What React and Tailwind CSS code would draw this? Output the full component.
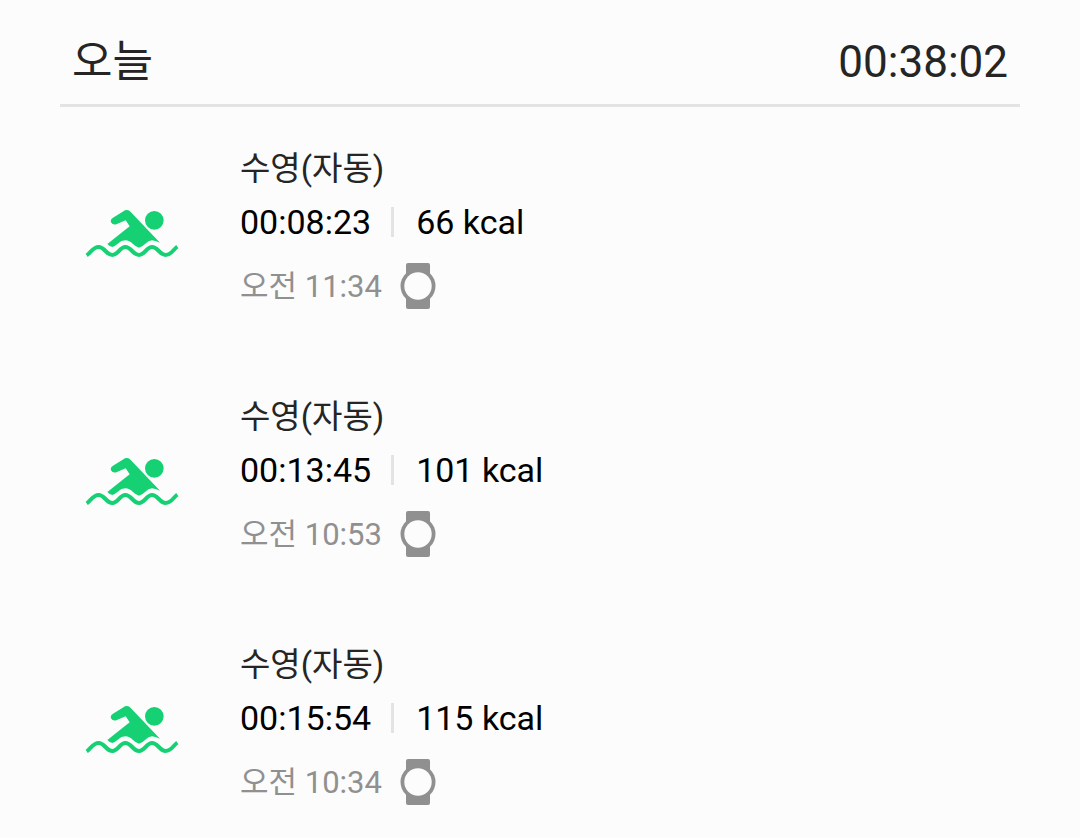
const workouts = [
  { id: 1, name: "수영(자동)", duration: "00:08:23", kcal: 66, time: "오전 11:34" },
  { id: 2, name: "수영(자동)", duration: "00:13:45", kcal: 101, time: "오전 10:53" },
  { id: 3, name: "수영(자동)", duration: "00:15:54", kcal: 115, time: "오전 10:34" },
];

function SwimIcon() {
  return (
    <svg className="w-24 h-14 shrink-0" viewBox="27 30 288 168" fill="#16d174" aria-hidden="true">
      <circle cx="238" cy="76" r="28" />
      <path d="M114 68L150 46Q158 43 165 49L255 143Q244 138 231 136Q220 137 211 146Q201 156 192 158Q183 156 174 147Q163 136 151 136Q139 136 128 146Q119 154 112 156Q104 154 97 147L164 94L152 76L124 88Q113 91 108 82Q105 73 114 68Z" />
      <path
        d="M35 181C46 174 54 156 71 156C89 156 94 180 112 180C130 180 134 156 151 156C169 156 174 180 192 180C210 180 214 156 231 156C249 156 254 180 272 180C289 180 296 162 307 155"
        fill="none"
        stroke="#16d174"
        strokeWidth="12"
      />
    </svg>
  );
}

function WatchIcon() {
  return (
    <svg className="w-9 h-12 shrink-0" viewBox="0 0 36 48" aria-hidden="true">
      <path d="M8 1H28Q30 1 30 3V45Q30 47 28 47H8Q6 47 6 45V3Q6 1 8 1Z" fill="#909090" />
      <circle cx="18" cy="24" r="17.5" fill="#909090" />
      <circle cx="18" cy="24" r="13.7" fill="#fcfcfc" />
    </svg>
  );
}

export default function App() {
  return (
    <main className="min-h-screen bg-[#fcfcfc] px-[60px] font-[Roboto,'Noto_Sans_CJK_KR',sans-serif] text-[#252525]">
      {/* Header */}
      <header className="flex items-center justify-between border-b-3 border-[#e3e3e3] px-3 pt-[26px] pb-[6px] text-[44px] leading-[72px]">
        <h1>오늘</h1>
        <p>00:38:02</p>
      </header>

      {/* Workouts */}
      <ul className="flex flex-col gap-[72px] pt-[38px]">
        {workouts.map((workout) => (
          <li key={workout.id} className="flex items-center gap-[60px] pl-6">
            <SwimIcon />
            <div>
              <h2 className="text-[33px] leading-[48px]">{workout.name}</h2>
              <div className="flex h-[58px] items-center text-[34px] text-black">
                <span>{workout.duration}</span>
                <span className="ml-5 mr-[22px] h-[30px] w-[3px] bg-[#e3e3e3]" />
                <span>{workout.kcal} kcal</span>
              </div>
              <div className="flex h-[70px] items-center gap-[18px] text-[31px] text-[#909090]">
                <span className="pt-0.5">{workout.time}</span>
                <WatchIcon />
              </div>
            </div>
          </li>
        ))}
      </ul>
    </main>
  );
}
